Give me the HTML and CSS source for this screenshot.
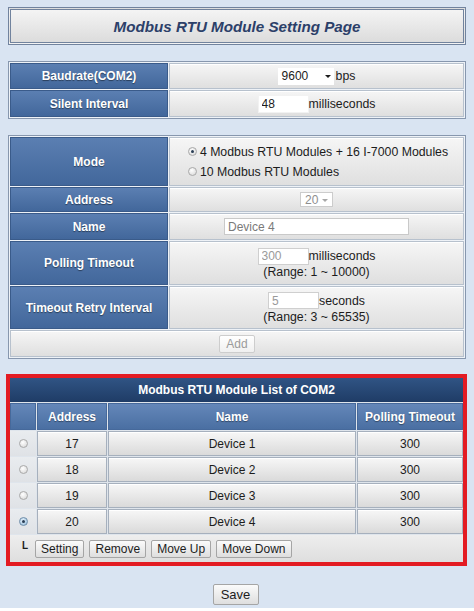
FILE: index.html
```html
<!DOCTYPE html>
<html lang="en">
<head>
<meta charset="utf-8">
<title>Modbus RTU Module Setting Page</title>
<link rel="stylesheet" href="styles.css">
</head>
<body>
<div class="page">
  <div class="title">Modbus RTU Module Setting Page</div>

  <div class="form form-com">
    <div class="label">Baudrate(COM2)</div>
    <div class="value">
      <span class="line">
        <span class="select sel-baud"><span class="sel-text">9600</span><span class="arrow"></span></span><span class="unit gap">bps</span>
      </span>
    </div>
    <div class="label">Silent Interval</div>
    <div class="value">
      <span class="line"><input class="input in-plain" type="text" value="48"><span class="unit">milliseconds</span></span>
    </div>
  </div>

  <div class="form form-mod">
    <div class="label">Mode</div>
    <div class="value">
      <div class="modes">
        <label class="opt"><span class="radio checked"></span>4 Modbus RTU Modules + 16 I-7000 Modules</label>
        <label class="opt"><span class="radio"></span>10 Modbus RTU Modules</label>
      </div>
    </div>
    <div class="label">Address</div>
    <div class="value">
      <span class="select sel-addr"><span class="sel-text">20</span><span class="arrow light"></span></span>
    </div>
    <div class="label">Name</div>
    <div class="value">
      <input class="input in-name" type="text" value="Device 4" disabled>
    </div>
    <div class="label">Polling Timeout</div>
    <div class="value stack">
      <span class="line"><input class="input in-dim" type="text" value="300" disabled><span class="unit">milliseconds</span></span>
      <span class="range">(Range: 1 ~ 10000)</span>
    </div>
    <div class="label">Timeout Retry Interval</div>
    <div class="value stack">
      <span class="line"><input class="input in-dim" type="text" value="5" disabled><span class="unit">seconds</span></span>
      <span class="range">(Range: 3 ~ 65535)</span>
    </div>
    <div class="value full">
      <button class="btn btn-add" type="button" disabled>Add</button>
    </div>
  </div>

  <div class="listbox">
    <div class="list">
      <div class="lhead">Modbus RTU Module List of COM2</div>
      <div class="chead"></div>
      <div class="chead">Address</div>
      <div class="chead">Name</div>
      <div class="chead">Polling Timeout</div>

      <div class="rcell"><span class="radio"></span></div>
      <div class="cell">17</div>
      <div class="cell">Device 1</div>
      <div class="cell">300</div>

      <div class="rcell"><span class="radio"></span></div>
      <div class="cell">18</div>
      <div class="cell">Device 2</div>
      <div class="cell">300</div>

      <div class="rcell"><span class="radio"></span></div>
      <div class="cell">19</div>
      <div class="cell">Device 3</div>
      <div class="cell">300</div>

      <div class="rcell"><span class="radio checked blue"></span></div>
      <div class="cell">20</div>
      <div class="cell">Device 4</div>
      <div class="cell">300</div>

      <div class="btnrow">
        <span class="corner">L</span>
        <button class="btn" type="button">Setting</button>
        <button class="btn" type="button">Remove</button>
        <button class="btn" type="button">Move Up</button>
        <button class="btn" type="button">Move Down</button>
      </div>
    </div>
  </div>

  <div class="savebar">
    <button class="btn btn-save" type="button">Save</button>
  </div>
</div>
</body>
</html>
```

FILE: styles.css
```css
* { box-sizing: border-box; }

html { background: #ffffff; }

body {
  margin: 0;
  font-family: "Liberation Sans", Arial, sans-serif;
  font-size: 12.3px;
  color: #1c1c1c;
}

.page {
  width: 474px;
  height: 608px;
  background: #d9e4f2;
  padding: 7px 8px 0 8px;
  overflow: hidden;
}

.title {
  height: 38px;
  border: 3px double #71839e;
  background: linear-gradient(#f4f4f4, #dcdcdc);
  display: flex;
  align-items: center;
  justify-content: center;
  font-size: 15.2px;
  font-weight: bold;
  font-style: italic;
  color: #2c4069;
}

.form {
  margin-top: 16px;
  display: grid;
  grid-template-columns: 158px 1fr;
  gap: 1px;
  padding: 1px;
  border: 1px solid #8797ae;
  background: #eef2f7;
}

.form-com { grid-template-rows: 26px 27px; }
.form-mod { grid-template-rows: 49px 25px 27px 44px 43px 27px; }

.label {
  display: flex;
  align-items: center;
  justify-content: center;
  background: linear-gradient(#5b7fb2, #42679b);
  border: 1px solid #3a5b8a;
  color: #ffffff;
  font-weight: bold;
  font-size: 12px;
  text-shadow: 0 1px 1px rgba(0, 0, 0, 0.45);
}

.value {
  display: flex;
  align-items: center;
  justify-content: center;
  background: linear-gradient(#f6f6f6, #dfdfdf);
  border: 1px solid #b7c1cd;
  box-shadow: inset 0 1px 0 #ffffff;
}

.value.full { grid-column: 1 / -1; }

.value.stack {
  flex-direction: column;
  gap: 0;
}

.line {
  display: flex;
  align-items: center;
  height: 18px;
}

.range {
  line-height: 14px;
}

.unit.gap { margin-left: 2px; }

.input {
  font-family: inherit;
  font-size: 12px;
  height: 18px;
  width: 51px;
  padding: 0 3px;
  margin: 0;
  border: 1px solid #f2f2f2;
  background: #ffffff;
  color: #1c1c1c;
  outline: none;
}

.in-dim {
  height: 17px;
  border-color: #cfcfcf;
  color: #9a9a9a;
}

.in-name {
  width: 185px;
  height: 17px;
  border-color: #c9c9c9;
  color: #7a7a7a;
}

.select {
  position: relative;
  display: inline-flex;
  align-items: center;
  background: #ffffff;
  font-size: 12px;
}

.sel-baud {
  width: 56px;
  height: 17px;
  padding-left: 4px;
}

.sel-addr {
  width: 33px;
  height: 15px;
  padding-left: 4px;
  border: 1px solid #cccccc;
  color: #8e8e8e;
}

.arrow {
  position: absolute;
  right: 3px;
  top: 50%;
  margin-top: -1px;
  width: 0;
  height: 0;
  border-left: 3px solid transparent;
  border-right: 3px solid transparent;
  border-top: 3px solid #1c1c1c;
}

.arrow.light { border-top-color: #a8a8a8; right: 4px; }

.modes {
  display: flex;
  flex-direction: column;
  gap: 6px;
  margin-left: 3px;
}

.opt {
  display: flex;
  align-items: center;
  gap: 3px;
  height: 14px;
}

.radio {
  display: inline-block;
  width: 9px;
  height: 9px;
  border-radius: 50%;
  border: 1px solid #a9a9a9;
  background: radial-gradient(circle at 40% 35%, #ffffff, #d4d4d4);
  position: relative;
}

.radio.checked::after {
  content: "";
  position: absolute;
  left: 2px;
  top: 2px;
  width: 3px;
  height: 3px;
  border-radius: 50%;
  background: #2a3e55;
}

.radio.blue {
  border-color: #6f8eaa;
  background: radial-gradient(circle at 40% 35%, #e6f2fb, #8fb8d8);
}

.btn {
  font-family: inherit;
  font-size: 12px;
  color: #1c1c1c;
  height: 18px;
  padding: 0 5px;
  margin: 0;
  border: 1px solid #a5a5a5;
  border-radius: 2px;
  background: linear-gradient(#fbfbfb, #dedede);
  line-height: 16px;
}

.btn-add {
  width: 36px;
  color: #9b9b9b;
  border-color: #cdcdcd;
  background: linear-gradient(#ffffff, #f0f0f0);
}

.listbox {
  margin: 15px 0 0 -2px;
  width: 461px;
  border: 4px solid #e31b23;
}

.list {
  display: grid;
  grid-template-columns: 26px 70px 248px 106px;
  grid-template-rows: 24px 27px 25px 25px 25px 25px 27px;
  gap: 1px;
  background: #dfe5ec;
}

.lhead {
  grid-column: 1 / -1;
  display: flex;
  align-items: center;
  justify-content: center;
  background: linear-gradient(#305484, #1f3c66);
  color: #ffffff;
  font-weight: bold;
  font-size: 12px;
}

.chead {
  display: flex;
  align-items: center;
  justify-content: center;
  background: linear-gradient(#6487b9, #4a6fa2);
  border: 1px solid #46699b;
  color: #ffffff;
  font-weight: bold;
  font-size: 12px;
  text-shadow: 0 1px 1px rgba(0, 0, 0, 0.4);
}

.cell {
  display: flex;
  align-items: center;
  justify-content: center;
  background: linear-gradient(#f7f7f7, #dadada);
  border: 1px solid #a6b0bd;
  box-shadow: inset 0 1px 0 #ffffff;
  font-size: 12px;
}

.rcell {
  display: flex;
  align-items: center;
  justify-content: center;
  background: linear-gradient(#e9ecef, #dfe2e6);
}

.btnrow {
  grid-column: 1 / -1;
  display: flex;
  align-items: center;
  gap: 5px;
  padding-left: 12px;
  background: linear-gradient(#eeeeee, #dedede);
}

.corner {
  font-weight: bold;
  font-size: 10px;
  margin-right: 2px;
  margin-top: -6px;
}

.savebar {
  margin-top: 18px;
  display: flex;
  justify-content: center;
  padding-right: 3px;
}

.btn-save {
  height: 21px;
  width: 46px;
  font-size: 13px;
  padding: 0;
  line-height: 19px;
}
```
